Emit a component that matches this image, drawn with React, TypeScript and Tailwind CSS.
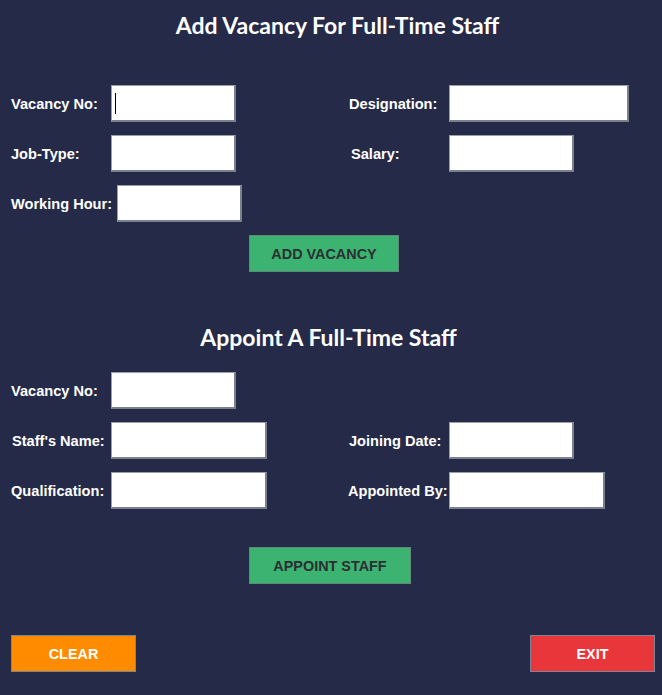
import type { ReactNode } from "react";

// Staff desk — two stacked forms (vacancy + appointment) on a navy panel,
// with clear/exit actions pinned along the bottom.

const label = "pt-[2px] text-[14.6px] font-bold text-white whitespace-nowrap";
const entry =
  "h-[37px] bg-white outline-none border-t border-l border-[#9aa0aa] border-b-2 border-r-2 border-b-[#7b818c] border-r-[#7b818c] px-1 text-[14px] text-black";

function Field({
  text,
  labelW,
  entryW,
  caret,
}: {
  text: string;
  labelW: number;
  entryW: number;
  caret?: boolean;
}) {
  return (
    <div className="flex items-center">
      <span className={label} style={{ width: labelW }}>
        {text}
      </span>
      <div className="relative">
        <input className={entry} style={{ width: entryW }} />
        {caret && <span className="absolute left-[4px] top-[8px] h-[21px] w-px bg-black" />}
      </div>
    </div>
  );
}

function Row({ left, right }: { left: ReactNode; right?: ReactNode }) {
  return (
    <div className="flex h-[37px] items-center">
      <div className="w-[338px] pl-[11px]">{left}</div>
      <div className="pl-[11px]">{right}</div>
    </div>
  );
}

function Title({ children, className }: { children: string; className?: string }) {
  return (
    <h1
      className={`text-center text-[23px] leading-[30px] font-bold text-white ${className ?? ""}`}
      style={{ fontFamily: "Lato, 'Open Sans', sans-serif" }}
    >
      {children}
    </h1>
  );
}

export default function App() {
  return (
    <div
      className="flex h-[695px] w-[662px] flex-col bg-[#252a48]"
      style={{ fontFamily: "'Liberation Sans', Arial, sans-serif" }}
    >
      <Title className="mt-[10px] pl-[13px]">Add Vacancy For Full-Time Staff</Title>

      <div className="mt-[45px] flex flex-col gap-[13px]">
        <Row
          left={<Field text="Vacancy No:" labelW={100} entryW={125} caret />}
          right={<Field text="Designation:" labelW={100} entryW={180} />}
        />
        <Row
          left={<Field text="Job-Type:" labelW={100} entryW={125} />}
          right={
            <div className="pl-[2px]">
              <Field text="Salary:" labelW={98} entryW={125} />
            </div>
          }
        />
        <Row left={<Field text="Working Hour:" labelW={106} entryW={125} />} />
      </div>

      <button className="mt-[13px] ml-[249px] h-[37px] w-[150px] border border-[#5f8a78] bg-[#3cb371] pt-[3px] text-[14.4px] font-bold text-[#2b2f33]">
        ADD VACANCY
      </button>

      <Title className="mt-[50px] pr-[5px]">Appoint A Full-Time Staff</Title>

      <div className="mt-[20px] flex flex-col gap-[13px]">
        <Row left={<Field text="Vacancy No:" labelW={100} entryW={125} />} />
        <Row
          left={
            <div className="pl-px">
              <Field text="Staff's Name:" labelW={99} entryW={156} />
            </div>
          }
          right={<Field text="Joining Date:" labelW={100} entryW={125} />}
        />
        <Row
          left={<Field text="Qualification:" labelW={100} entryW={156} />}
          right={
            <div className="-ml-px">
              <Field text="Appointed By:" labelW={101} entryW={156} />
            </div>
          }
        />
      </div>

      <button className="mt-[38px] ml-[249px] h-[37px] w-[162px] border border-[#5f8a78] bg-[#3cb371] pt-[3px] text-[14.4px] font-bold text-[#2b2f33]">
        APPOINT STAFF
      </button>

      <div className="mt-[51px] flex justify-between px-[11px]">
        <button className="h-[37px] w-[125px] border border-[#7c8594] bg-[#ff8c00] pt-[3px] text-[14.4px] font-bold text-white">
          CLEAR
        </button>
        <button className="mr-[-4px] h-[37px] w-[125px] border border-[#7c8594] bg-[#e8363a] pt-[3px] text-[14.4px] font-bold text-white">
          EXIT
        </button>
      </div>
    </div>
  );
}
